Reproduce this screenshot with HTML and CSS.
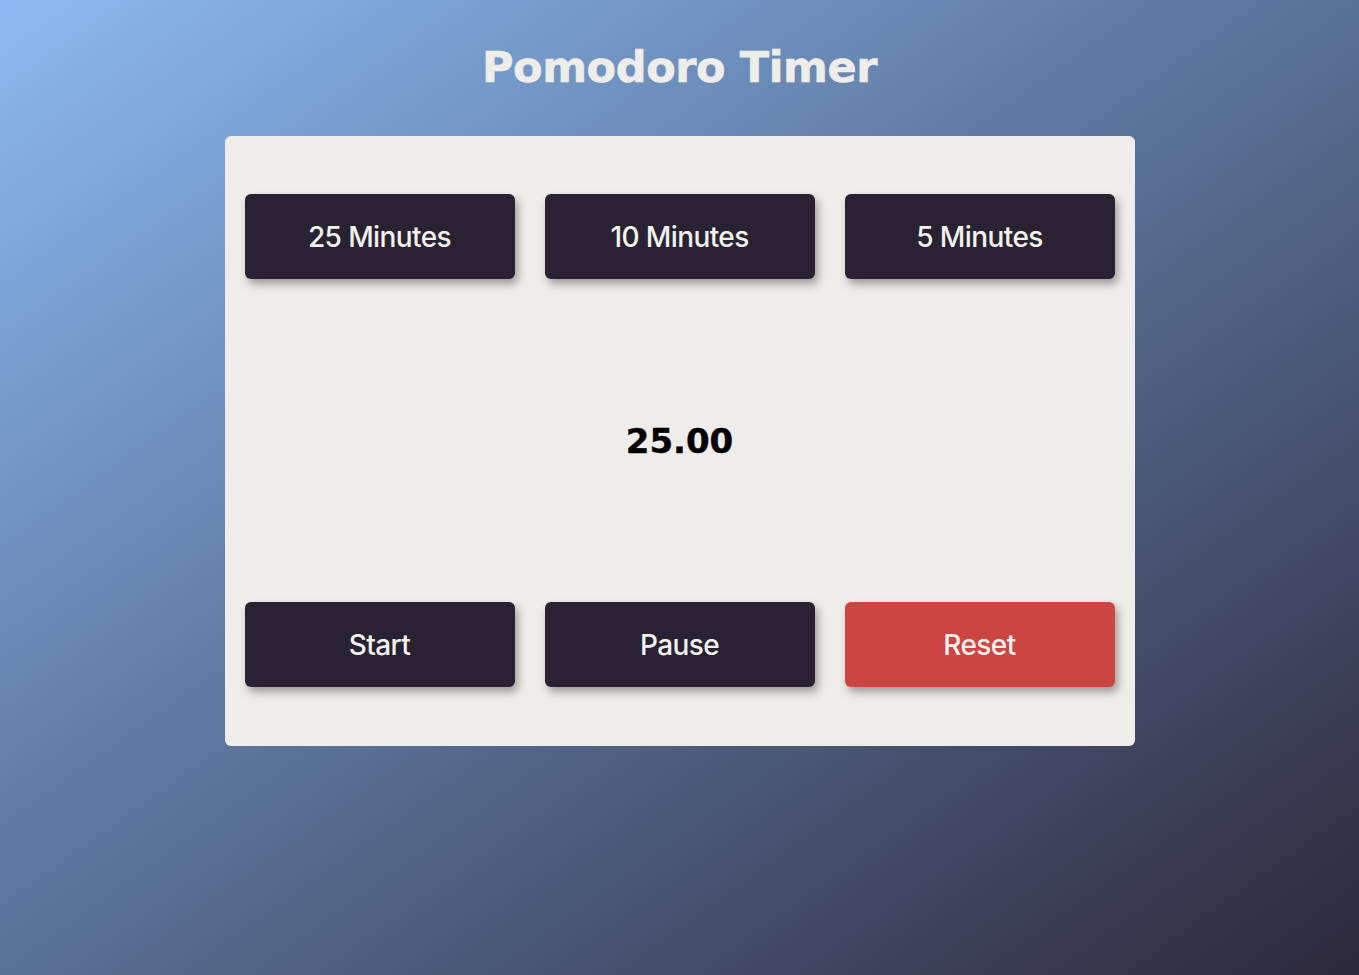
FILE: index.html
```html
<!DOCTYPE html>
<html lang="en">
<head>
<meta charset="utf-8">
<title>Pomodoro Timer</title>
<link rel="stylesheet" href="styles.css">
</head>
<body>
<main class="page">
  <h1 class="title">Pomodoro Timer</h1>
  <section class="card">
    <div class="row">
      <button class="btn">25 Minutes</button>
      <button class="btn">10 Minutes</button>
      <button class="btn">5 Minutes</button>
    </div>
    <div class="time">25.00</div>
    <div class="row">
      <button class="btn">Start</button>
      <button class="btn">Pause</button>
      <button class="btn btn-reset">Reset</button>
    </div>
  </section>
</main>
</body>
</html>
```
FILE: styles.css
```css
html, body {
  margin: 0;
  padding: 0;
  height: 100%;
}
body {
  background: linear-gradient(to bottom right, #8cbaf2 0%, #5e789f 45%, #2c283b 100%);
  font-family: "Inter", "Liberation Sans", sans-serif;
}
.page {
  display: flex;
  flex-direction: column;
  align-items: center;
  padding-top: 37px;
}
.title {
  margin: 0;
  font-family: "DejaVu Sans", sans-serif;
  font-weight: 700;
  font-size: 43px;
  line-height: 60px;
  color: #efede9;
  letter-spacing: -0.4px;
  -webkit-text-stroke: 0.6px #efede9;
}
.card {
  margin-top: 39px;
  width: 910px;
  height: 610px;
  box-sizing: border-box;
  padding: 58px 20px 59px;
  background: #efede9;
  border-radius: 6px;
  display: flex;
  flex-direction: column;
  justify-content: space-between;
}
.row {
  display: flex;
  gap: 30px;
}
.btn {
  flex: 1;
  height: 85px;
  border: none;
  border-radius: 6px;
  background: #292233;
  color: #f4f1ee;
  font-family: "Inter", "Liberation Sans", sans-serif;
  font-size: 28px;
  font-weight: 500;
  letter-spacing: -0.6px;
  box-shadow: 3px 5px 8px rgba(0, 0, 0, 0.35);
  cursor: pointer;
}
.btn-reset {
  background: #cb4541;
}
.time {
  text-align: center;
  font-family: "DejaVu Sans", sans-serif;
  font-weight: 700;
  font-size: 34px;
  color: #000;
  -webkit-text-stroke: 0.4px #000;
}
```
